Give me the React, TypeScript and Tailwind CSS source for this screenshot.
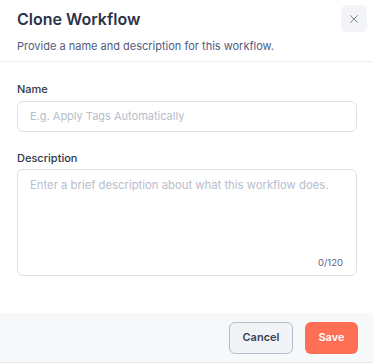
import React from "react";

export default function App() {
  return (
    <div className="w-[373px] h-[363px] bg-white flex flex-col overflow-hidden" style={{ fontFamily: "Inter, 'Noto Sans', sans-serif" }}>
      <div className="flex justify-between items-start pl-[17px] pr-[6px] pt-[5px] h-[62px] border-b border-[#eceef1]">
        <div className="pt-[2px]">
          <h1 className="text-[16px] leading-[24px] font-semibold text-[#2b3348]">Clone Workflow</h1>
          <p className="mt-[7px] text-[11px] leading-[16px] text-[#4f5b80]">Provide a name and description for this workflow.</p>
        </div>
        <button className="w-[26px] h-[27px] rounded-md bg-[#f3f4f7] flex items-center justify-center text-[#7a8194]">
          <svg width="10" height="10" viewBox="0 0 12 12" fill="none" stroke="currentColor" strokeWidth="1.2" strokeLinecap="round">
            <path d="M2 2L10 10M10 2L2 10" />
          </svg>
        </button>
      </div>
      <div className="px-[17px] pt-[19px] flex flex-col flex-1">
        <label className="text-[11px] leading-[16px] font-medium text-[#2f3748]">Name</label>
        <div className="mt-[4px] h-[31px] w-[340px] rounded-md border border-[#dde1e7] flex items-center px-[12px]">
          <span className="text-[11px] text-[#b6bdcb]">E.g. Apply Tags Automatically</span>
        </div>
        <label className="mt-[18px] text-[11px] leading-[16px] font-medium text-[#2f3748]">Description</label>
        <div className="mt-[3px] h-[107px] w-[340px] rounded-md border border-[#dde1e7] flex flex-col justify-between px-[12px] pt-[7px] pb-[5px]">
          <span className="text-[11.3px] leading-[16px] text-[#b6bdcb]">Enter a brief description about what this workflow does.</span>
          <span className="self-end text-[9.5px] leading-[14px] text-[#5a6482] pr-[1px]">0/120</span>
        </div>
      </div>
      <div className="h-[50px] bg-[#f7f8fa] border-b border-[#e5e7eb] flex items-center justify-end gap-[12px] pr-[15px]">
        <button className="w-[64px] h-[32px] rounded-md border border-[#b4becd] bg-[#f1f3f6] text-[11px] font-semibold text-[#3b4257]">Cancel</button>
        <button className="w-[53px] h-[32px] rounded-md bg-[#ff6f55] text-[11px] font-semibold text-white">Save</button>
      </div>
    </div>
  );
}
